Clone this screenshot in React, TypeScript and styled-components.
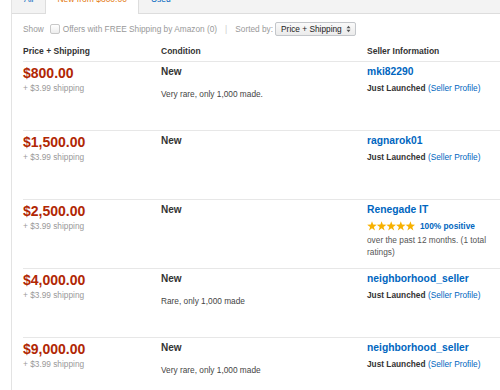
import styled, { createGlobalStyle } from "styled-components";

const GlobalStyle = createGlobalStyle`
  body {
    margin: 0;
    background: #fff;
    font-family: "Liberation Sans", Arial, sans-serif;
    color: #333;
  }
`

const Page = styled.div`
  margin-left: 11px;
  border-left: 1px solid #e3e3e3;
  min-height: 390px;
  overflow: hidden;
`

const TabBar = styled.div`
  display: flex;
  align-items: flex-start;
  height: 13px;
  background: #f3f3f3;
  border-bottom: 1px solid #dddddd;
`

const Tab = styled.div<{ $active?: boolean }>`
  display: flex;
  align-items: flex-end;
  box-sizing: border-box;
  height: ${props => props.$active ? "14px" : "13px"};
  padding: 0 11px ${props => props.$active ? "10px" : "9px"} 11px;
  font-size: 8.5px;
  line-height: 10px;
  white-space: nowrap;
  color: ${props => props.$active ? "#e47911" : "#0066c0"};
  background: ${props => props.$active ? "#fff" : "transparent"};
  border-left: 1px solid ${props => props.$active ? "#dddddd" : "transparent"};
  border-right: 1px solid ${props => props.$active ? "#dddddd" : "transparent"};
`

const FilterBar = styled.div`
  display: flex;
  align-items: center;
  height: 14px;
  margin-top: 8px;
  padding-left: 11px;
  font-size: 8.3px;
  color: #999;
  white-space: nowrap;
`

const CheckBox = styled.span`
  display: inline-block;
  width: 8px;
  height: 8px;
  margin: 0 3px 0 6px;
  border: 1px solid #c8c8c8;
  border-radius: 2px;
  background: linear-gradient(#ffffff, #ededed);
`

const Divider = styled.span`
  margin: 0 8px;
  color: #ccc;
`

const SortSelect = styled.div`
  display: flex;
  align-items: center;
  gap: 4px;
  box-sizing: border-box;
  height: 14px;
  margin-left: 2px;
  padding: 0 4px 0 5px;
  border: 1px solid #c3c6ca;
  border-radius: 2px;
  background: linear-gradient(#fafafa, #ebebeb);
  color: #222;
  font-size: 8.3px;
`

const columns = "138px 206px 1fr"

const HeaderRow = styled.div`
  display: grid;
  grid-template-columns: ${columns};
  margin-left: 11px;
  padding: 9px 0 4px;
  border-bottom: 1px solid #e7e7e7;
  font-size: 8.5px;
  line-height: 12px;
  font-weight: bold;
  color: #333;
`

const OfferRow = styled.div`
  display: grid;
  grid-template-columns: ${columns};
  box-sizing: border-box;
  height: 69px;
  margin-left: 11px;
  padding-top: 3px;
  border-bottom: 1px solid #e7e7e7;
`

const Cell = styled.div`
  display: flex;
  flex-direction: column;
  align-items: flex-start;
`

const Price = styled.div`
  font-size: 14px;
  line-height: 16px;
  font-weight: bold;
  color: #b12704;
`

const Shipping = styled.div`
  margin-top: 1px;
  font-size: 8.3px;
  line-height: 12px;
  color: #999;
`

const Condition = styled.div`
  font-size: 10px;
  line-height: 14px;
  font-weight: bold;
  color: #333;
`

const Note = styled.div`
  margin-top: 9px;
  font-size: 8.3px;
  line-height: 12px;
  color: #444;
`

const SellerName = styled.div`
  font-size: 10.3px;
  line-height: 14px;
  font-weight: bold;
  color: #0066c0;
`

const SellerLine = styled.div<{ $gap: number }>`
  margin-top: ${props => props.$gap}px;
  font-size: 8.3px;
  line-height: 12px;
  color: #555;
`

const Launched = styled.span`
  font-weight: bold;
  color: #333;
`

const ProfileLink = styled.span`
  color: #0066c0;
`

const RatingLine = styled.div`
  display: flex;
  align-items: center;
  gap: 5px;
  margin-top: 3px;
  height: 12px;
  font-size: 8.3px;
  font-weight: bold;
  color: #0066c0;
`

const starPoints = "5,0.2 6.2,3.6 9.8,3.7 6.9,5.9 8,9.4 5,7.3 2,9.4 3.1,5.9 0.2,3.7 3.8,3.6"

function Stars() {
    return (
        <svg width="48" height="10" viewBox="0 0 48 10">
            {[0, 1, 2, 3, 4].map((i) => (
                <polygon key={i} points={starPoints} transform={`translate(${i * 9.6} 0)`} fill="#f7b100" />
            ))}
        </svg>
    )
}

function SortArrows() {
    return (
        <svg width="5" height="8" viewBox="0 0 5 8">
            <polygon points="0.5,3.2 2.5,0.8 4.5,3.2" fill="#555" />
            <polygon points="0.5,4.8 2.5,7.2 4.5,4.8" fill="#555" />
        </svg>
    )
}

interface Offer {
    price: string;
    note?: string;
    seller: string;
    rated?: boolean;
}

const offers: Offer[] = [
    { price: "$800.00", note: "Very rare, only 1,000 made.", seller: "mki82290" },
    { price: "$1,500.00", seller: "ragnarok01" },
    { price: "$2,500.00", seller: "Renegade IT", rated: true },
    { price: "$4,000.00", note: "Rare, only 1,000 made", seller: "neighborhood_seller" },
    { price: "$9,000.00", note: "Very rare, only 1,000 made", seller: "neighborhood_seller" },
]

function App() {
    return (
        <Page>
            <GlobalStyle />
            <TabBar>
                <Tab>All</Tab>
                <Tab $active>New from $800.00</Tab>
                <Tab>Used</Tab>
            </TabBar>
            <FilterBar>
                Show
                <CheckBox />
                Offers with FREE Shipping by Amazon (0)
                <Divider>|</Divider>
                Sorted by:
                <SortSelect>
                    Price + Shipping
                    <SortArrows />
                </SortSelect>
            </FilterBar>
            <HeaderRow>
                <div>Price + Shipping</div>
                <div>Condition</div>
                <div>Seller Information</div>
            </HeaderRow>
            {offers.map((offer, index) => (
                <OfferRow key={index}>
                    <Cell>
                        <Price>{offer.price}</Price>
                        <Shipping>+ $3.99 shipping</Shipping>
                    </Cell>
                    <Cell>
                        <Condition>New</Condition>
                        {offer.note && <Note>{offer.note}</Note>}
                    </Cell>
                    <Cell>
                        <SellerName>{offer.seller}</SellerName>
                        {offer.rated ? (
                            <>
                                <RatingLine>
                                    <Stars />
                                    100% positive
                                </RatingLine>
                                <SellerLine $gap={2}>over the past 12 months. (1 total ratings)</SellerLine>
                            </>
                        ) : (
                            <SellerLine $gap={3}>
                                <Launched>Just Launched</Launched> <ProfileLink>(Seller Profile)</ProfileLink>
                            </SellerLine>
                        )}
                    </Cell>
                </OfferRow>
            ))}
        </Page>
    )
}

export default App;
